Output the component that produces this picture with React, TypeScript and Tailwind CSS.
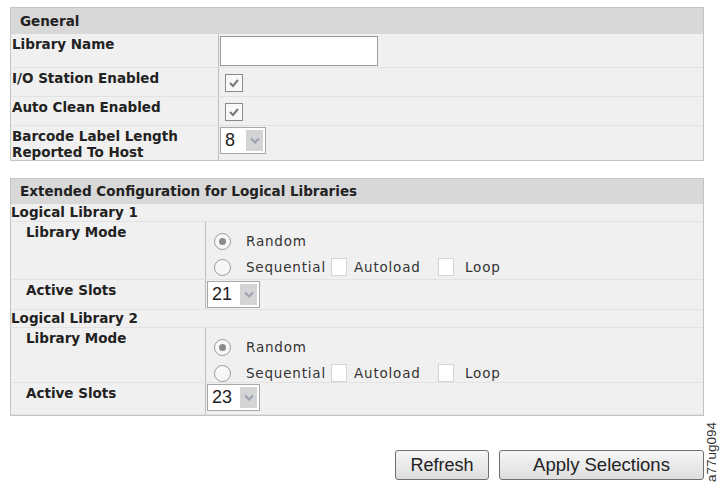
const vFont = { fontFamily: '"DejaVu Sans", Verdana, sans-serif' };

function Check() {
  return (
    <span className="flex h-[18px] w-[18px] items-center justify-center border border-[#8a8a8a] bg-[#f8f8f8]">
      <svg width="12" height="10" viewBox="0 0 12 10">
        <path d="M2 5 L5 8 L10 2" fill="none" stroke="#777" strokeWidth="2" />
      </svg>
    </span>
  );
}

function Box() {
  return <span className="inline-block h-[18px] w-[16px] border border-[#d4d4d4] bg-white" />;
}

function Radio({ on }: { on?: boolean }) {
  return (
    <span className="flex h-[17px] w-[17px] items-center justify-center rounded-full border border-[#9a9a9a] bg-[#f7f7f7]">
      {on && <span className="h-[7px] w-[7px] rounded-full bg-[#8a8a8a]" />}
    </span>
  );
}

function Select({ value, w }: { value: string; w: string }) {
  return (
    <div className={`flex h-[27px] items-center border border-[#a8a8a8] bg-white ${w}`}>
      <span className="pl-[4px] text-[18px] text-[#222]" style={{ fontFamily: '"Liberation Sans", Arial, sans-serif' }}>
        {value}
      </span>
      <span className="ml-auto mr-[2px] flex h-[21px] w-[17px] items-center justify-center bg-[#d4d4d4]">
        <svg width="10" height="7" viewBox="0 0 10 7">
          <path d="M1 1.5 L5 5.5 L9 1.5" fill="none" stroke="#9aa2b0" strokeWidth="2" />
        </svg>
      </span>
    </div>
  );
}

function Row({ label, h, children, last }: { label: React.ReactNode; h: string; children?: React.ReactNode; last?: boolean }) {
  return (
    <div className={`flex ${h} ${last ? "" : "border-b border-[#e2e2e2]"}`}>
      <div className="w-[207px] shrink-0 pl-[1px] pt-[2px] text-[13.5px] font-bold leading-[16px] text-[#222]">{label}</div>
      <div className="flex flex-1 border-l border-[#bdbdbd]">{children}</div>
    </div>
  );
}

function Mode() {
  return (
    <div className="flex flex-col gap-[6px] pl-[8px] pt-[9px] text-[13.5px] tracking-[0.8px] text-[#333]">
      <div className="flex items-center">
        <Radio on />
        <span className="ml-[15px]">Random</span>
      </div>
      <div className="flex items-center">
        <Radio />
        <span className="ml-[15px] w-[85px]">Sequential</span>
        <Box />
        <span className="ml-[7px] w-[84px]">Autoload</span>
        <Box />
        <span className="ml-[11px]">Loop</span>
      </div>
    </div>
  );
}

function SubRow({ label, h, children }: { label: string; h: string; children?: React.ReactNode }) {
  return (
    <div className={`flex ${h} border-b border-[#e2e2e2]`}>
      <div className="w-[194px] shrink-0 pl-[15px] pt-[2px] text-[13.5px] font-bold leading-[16px] text-[#222]">{label}</div>
      <div className="flex flex-1 border-l border-[#bdbdbd]">{children}</div>
    </div>
  );
}

const logical = [
  { n: "1", v: "21", mode: "h-[58px]", slots: "h-[30px]" },
  { n: "2", v: "23", mode: "h-[55px]", slots: "h-[32px]" },
];

export default function App() {
  return (
    <div className="relative h-[503px] w-[722px] bg-white" style={vFont}>
      <div className="flex flex-col pl-[10px] pr-[18px] pt-[7px]">
        <div className="border border-[#c4c4c4] bg-[#f0f0f0]">
          <div className="flex h-[26px] items-center bg-[#d8d8d8] pl-[9px] text-[13.5px] font-bold text-[#222]">General</div>
          <Row label="Library Name" h="h-[34px]">
            <div className="ml-[1px] mt-[2px] h-[30px] w-[158px] border border-[#999] bg-white" />
          </Row>
          <Row label="I/O Station Enabled" h="h-[29px]">
            <div className="ml-[6px] mt-[6px]"><Check /></div>
          </Row>
          <Row label="Auto Clean Enabled" h="h-[29px]">
            <div className="ml-[6px] mt-[6px]"><Check /></div>
          </Row>
          <Row label={<>Barcode Label Length<br />Reported To Host</>} h="h-[34px]" last>
            <div className="ml-[1px] mt-[1px]"><Select value="8" w="w-[46px]" /></div>
          </Row>
        </div>

        <div className="mt-[17px] border border-[#c4c4c4] bg-[#f0f0f0]">
          <div className="flex h-[25px] items-center bg-[#d8d8d8] pl-[9px] text-[13.5px] font-bold text-[#222]">
            Extended Configuration for Logical Libraries
          </div>
          {logical.map((l) => (
            <div key={l.n}>
              <div className="h-[18px] border-b border-[#e2e2e2] text-[13.5px] font-bold leading-[17px] text-[#222]">
                Logical Library {l.n}
              </div>
              <SubRow label="Library Mode" h={l.mode}>
                <Mode />
              </SubRow>
              <SubRow label="Active Slots" h={l.slots}>
                <div className="ml-[1px] mt-[1px]"><Select value={l.v} w="w-[53px]" /></div>
              </SubRow>
            </div>
          ))}
        </div>

        <div className="mt-[34px] flex justify-end gap-[10px]" style={{ fontFamily: '"Liberation Sans", Arial, sans-serif' }}>
          <button className="h-[30px] w-[94px] rounded-[3px] border border-[#707070] bg-gradient-to-b from-[#f6f6f6] to-[#dedede] text-[18px] text-[#222]">
            Refresh
          </button>
          <button className="h-[30px] w-[205px] rounded-[3px] border border-[#707070] bg-gradient-to-b from-[#f6f6f6] to-[#dedede] text-[18.5px] text-[#222]">
            Apply Selections
          </button>
        </div>
      </div>
      <div
        className="absolute left-[705px] top-[482px] origin-top-left -rotate-90 text-[13.5px] leading-[14px] text-[#333]"
        style={{ fontFamily: '"Liberation Sans", Arial, sans-serif' }}
      >
        a77ug094
      </div>
    </div>
  );
}
